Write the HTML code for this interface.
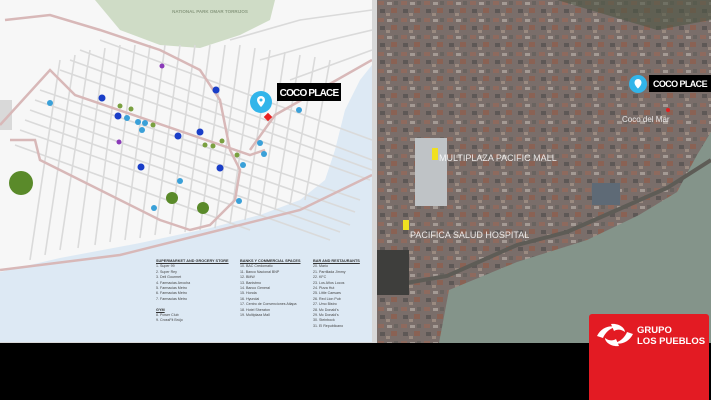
<!DOCTYPE html><html><head><style>
body{margin:0;width:711px;height:400px;overflow:hidden;background:#000;font-family:"Liberation Sans",sans-serif}
.lg{position:absolute;font-size:3.6px;line-height:5.4px;color:#444}
.lg b{display:block;text-decoration:underline;color:#333;font-size:3.8px}
</style></head><body>
<div style="position:absolute;left:0;top:0;width:711px;height:343px;background:#d8d8d8"></div>
<svg style="position:absolute;left:0;top:0" width="372" height="342">
<rect width="372" height="342" fill="#f7f7f7"/>
<path d="M95,0 L275,0 L270,20 L240,35 L200,48 L160,45 L120,30 Z" fill="#cfdcc6"/>
<path d="M0,272 L60,258 L140,243 L210,228 L260,215 L300,200 L325,180 L335,150 L345,110 L360,80 L372,65 L372,342 L0,342 Z" fill="#dde9f4"/>
<rect x="0" y="100" width="12" height="30" fill="#d9d9d9"/>
<g stroke="#dadada" stroke-width="1.6" fill="none">
<path d="M40,90 L360,200 M30,110 L350,225 M20,130 L330,240 M60,70 L370,180 M80,50 L372,160 M100,40 L372,140 M35,100 L355,212 M25,120 L340,232 M70,60 L372,170 M15,145 L250,230"/>
<path d="M60,60 L30,260 M90,50 L60,250 M120,45 L95,245 M150,45 L125,240 M180,45 L155,235 M210,45 L185,232 M240,45 L215,228 M270,50 L245,220 M300,55 L275,210 M330,60 L305,200 M75,55 L45,255 M105,48 L78,248 M135,45 L110,242 M165,45 L140,238 M195,45 L170,234 M225,45 L200,230 M255,48 L230,224 M285,52 L260,215 M315,57 L290,205"/>
<path d="M230,40 L300,20 L372,10 M260,60 L330,40 L372,30 M290,80 L372,50"/>
</g>
<g stroke="#d8b8b8" stroke-width="2.5" fill="none">
<path d="M0,125 L50,70 L75,95 L250,155 L265,150"/>
<path d="M5,20 L50,15 L100,30 L160,50 L200,70 L220,100 L230,150 L240,170 L235,200 L210,225 L190,230 L160,220 L120,200 L70,175 L40,160 L35,140 L10,140"/>
<path d="M0,270 L120,255 L200,235 L300,210 L372,175"/>
<path d="M250,150 L275,115 L372,60"/>
</g>
<circle cx="21" cy="183" r="12" fill="#5a8a2a"/><circle cx="172" cy="198" r="6" fill="#5a8a2a"/><circle cx="203" cy="208" r="6" fill="#5a8a2a"/>
<g fill="#1a3ec8"><circle cx="102" cy="98" r="3.5"/><circle cx="118" cy="116" r="3.5"/><circle cx="178" cy="136" r="3.5"/><circle cx="200" cy="132" r="3.5"/><circle cx="216" cy="90" r="3.5"/><circle cx="141" cy="167" r="3.5"/><circle cx="220" cy="168" r="3.5"/></g>
<g fill="#3aa0d8"><circle cx="50" cy="103" r="3"/><circle cx="127" cy="118" r="3"/><circle cx="138" cy="122" r="3"/><circle cx="145" cy="123" r="3"/><circle cx="142" cy="130" r="3"/><circle cx="260" cy="143" r="3"/><circle cx="264" cy="154" r="3"/><circle cx="243" cy="165" r="3"/><circle cx="180" cy="181" r="3"/><circle cx="154" cy="208" r="3"/><circle cx="239" cy="201" r="3"/><circle cx="299" cy="110" r="3"/></g>
<g fill="#7aa040"><circle cx="120" cy="106" r="2.5"/><circle cx="131" cy="109" r="2.5"/><circle cx="153" cy="125" r="2.5"/><circle cx="205" cy="145" r="2.5"/><circle cx="213" cy="146" r="2.5"/><circle cx="222" cy="141" r="2.5"/><circle cx="237" cy="155" r="2.5"/></g>
<g fill="#8a3ab8"><circle cx="162" cy="66" r="2.5"/><circle cx="119" cy="142" r="2.5"/></g>
<circle cx="261" cy="102" r="11" fill="#32b5ea"/><path d="M261,96 a4,4 0 0 1 4,4 c0,3 -4,7 -4,7 c0,0 -4,-4 -4,-7 a4,4 0 0 1 4,-4z" fill="#fff"/><circle cx="261" cy="100" r="1.5" fill="#32b5ea"/>
<rect x="265" y="114" width="6" height="6" fill="#e82020" transform="rotate(45 268 117)"/>
<rect x="277" y="83" width="64" height="18" fill="#000"/>
<text x="309" y="96" fill="#fff" font-size="10" text-anchor="middle" font-weight="bold" letter-spacing="-0.8">COCO PLACE</text>
<text x="210" y="13" fill="#8a9a80" font-size="4.5" font-weight="bold" text-anchor="middle">NATIONAL PARK OMAR TORRIJOS</text>
</svg>
<div class="lg" style="left:156px;top:259px"><b>SUPERMARKET AND GROCERY STORE</b>1. Super 99<br>2. Super Rey<br>3. Deli Gourmet<br>4. Farmacias Arrocha<br>5. Farmacias Metro<br>6. Farmacias Metro<br>7. Farmacias Metro<br><br><b>GYM</b>8. Power Club<br>9. CrossFit Brújo</div>
<div class="lg" style="left:240px;top:259px"><b>BANKS Y COMMERCIAL SPACES</b>10. BAC Credomatic<br>11. Banco Nacional BNP<br>12. BMW<br>13. Banistmo<br>14. Banco General<br>15. Honda<br>16. Hyundai<br>17. Centro de Convenciones Atlapa<br>18. Hotel Sheraton<br>19. Multiplaza Mall</div>
<div class="lg" style="left:313px;top:259px"><b>BAR AND RESTAURANTS</b>20. Mario<br>21. Parrillada Jimmy<br>22. KFC<br>23. Los Años Locos<br>24. Pizza Hut<br>25. Little Caesars<br>26. Red Lion Pub<br>27. Umo Bistro<br>28. Mc Donald's<br>29. Mc Donald's<br>30. Steinbock<br>31. El Republicano</div>
<svg style="position:absolute;left:377px;top:0" width="334" height="343">
<defs>
<pattern id="t" width="23" height="17" patternUnits="userSpaceOnUse">
<rect width="23" height="17" fill="#7a6e6a"/>
<rect x="1" y="1" width="6" height="4" fill="#8e6a5e"/><rect x="10" y="2" width="5" height="3" fill="#a49a94"/>
<rect x="3" y="9" width="5" height="4" fill="#5e5856"/><rect x="14" y="8" width="6" height="5" fill="#8a6254"/>
<rect x="17" y="1" width="4" height="4" fill="#6a6460"/><rect x="9" y="13" width="4" height="3" fill="#9a8a80"/>
</pattern>
</defs>
<rect width="334" height="343" fill="url(#t)"/>
<path d="M180,0 L334,0 L334,20 L280,30 L230,15 Z" fill="#4e5644" opacity=".6"/>
<path d="M62,343 L72,290 L140,262 L210,240 L262,215 L300,192 L320,155 L334,132 L334,343 Z" fill="#84948a"/>
<path d="M0,288 L70,276 L140,245 L190,232 L240,210 L290,188 L334,160" stroke="#5e5c56" stroke-width="4" fill="none"/>
<rect x="38" y="138" width="32" height="68" fill="#bfc3c6"/>
<rect x="215" y="183" width="28" height="22" fill="#5e6a76"/>
<rect x="0" y="250" width="32" height="45" fill="#3e3e3c"/>
<rect x="55" y="148" width="6" height="12" fill="#f0e020"/><rect x="26" y="220" width="6" height="10" fill="#f0e020"/>
<text x="62" y="161" fill="#fff" font-size="9" fill-opacity=".85">MULTIPLAZA PACIFIC MALL</text>
<text x="33" y="238" fill="#fff" font-size="9" fill-opacity=".85">PACIFICA SALUD HOSPITAL</text>
<text x="245" y="122" fill="#fff" font-size="8" fill-opacity=".85">Coco del Mar</text>
<circle cx="291" cy="110" r="2" fill="#e02020"/>
<rect x="272" y="75" width="62" height="17" fill="#000"/>
<circle cx="261" cy="84" r="9" fill="#32b5ea"/><path d="M261,79 a3.5,3.5 0 0 1 3.5,3.5 c0,3 -3.5,6 -3.5,6 c0,0 -3.5,-3 -3.5,-6 a3.5,3.5 0 0 1 3.5,-3.5z" fill="#fff"/>
<text x="303" y="87" fill="#fff" font-size="9" font-weight="bold" text-anchor="middle" letter-spacing="-0.6">COCO PLACE</text>
</svg>
<div style="position:absolute;left:589px;top:314px;width:120px;height:86px;background:#e31b23;border-radius:3px 3px 0 0"></div>
<svg style="position:absolute;left:595px;top:322px" width="40" height="26"><g fill="#fff"><path d="M2,14 C6,6 14,3 20,5 C14,7 10,11 8,16 Z"/><path d="M38,12 C34,20 26,23 20,21 C26,19 30,15 32,10 Z"/><path d="M16,2 C24,1 30,6 30,10 C26,7 22,7 19,9 Z"/><path d="M24,24 C16,25 10,20 10,16 C14,19 18,19 21,17 Z"/></g><circle cx="20" cy="13" r="3" fill="#e31b23"/></svg>
<div style="position:absolute;left:637px;top:325px;color:#fff;font-weight:bold;font-size:9.5px;line-height:11px">GRUPO<br>LOS PUEBLOS</div>
</body></html>
